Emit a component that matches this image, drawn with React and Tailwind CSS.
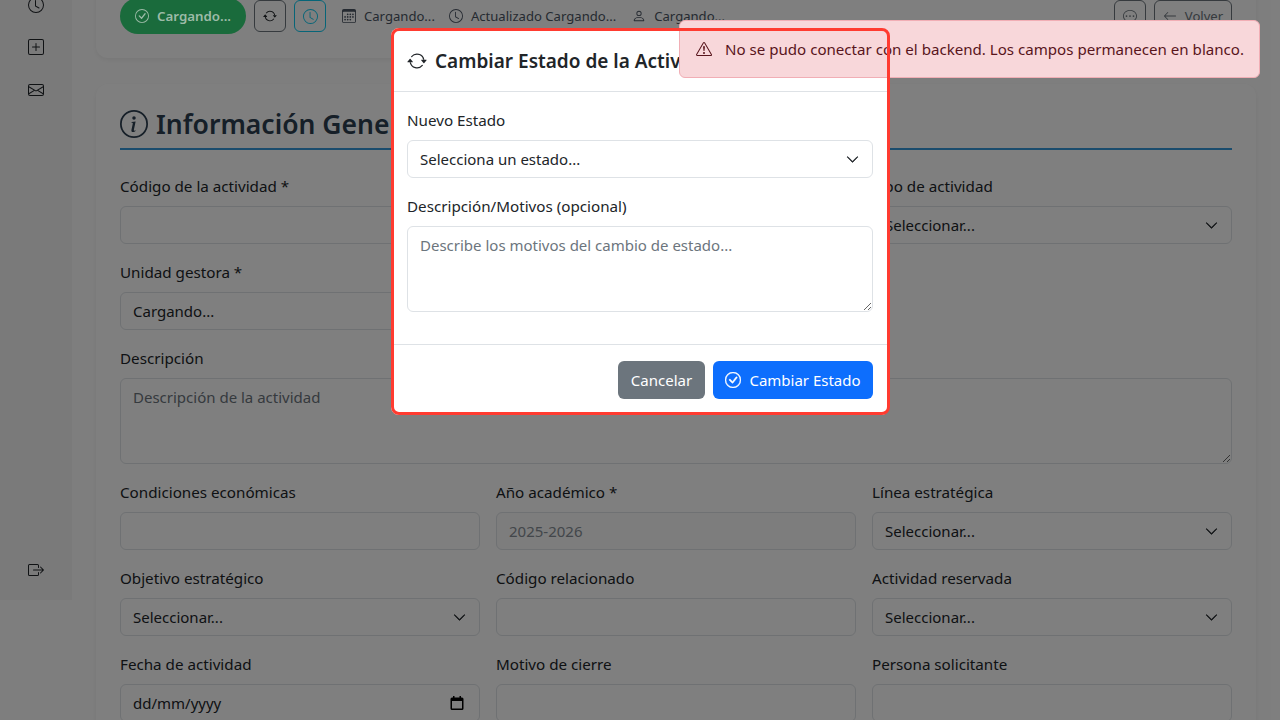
import React from 'react';
import {
  BsArrowRepeat, BsClock, BsPlusSquare, BsEnvelope, BsBoxArrowRight, BsCheckCircle, BsCalendar3,
  BsPerson, BsChatDots, BsArrowLeft, BsInfoCircle, BsExclamationTriangle, BsChevronDown,
} from 'react-icons/bs';

const control = 'w-full h-[38px] rounded-md border border-[#dee2e6] px-3 text-[15px] text-[#212529] flex items-center justify-between';

function Field({ label, children, className = '' }) {
  return (
    <div className={`mb-4 ${className}`}>
      <div className="h-6 mb-2 text-[15.2px] leading-6 text-[#212529]">{label}</div>
      {children}
    </div>
  );
}

function Select({ value }) {
  return (
    <div className={`${control} bg-white`}>
      <span>{value}</span>
      <BsChevronDown className="w-[13px] h-[13px] mr-[1px]" strokeWidth="0.8" />
    </div>
  );
}

function Input({ value }) {
  return <div className={`${control} bg-white`}>{value}</div>;
}

function Sidebar() {
  return (
    <div className="w-[72px] h-[640px] shrink-0 bg-[#f4f4f5] flex flex-col items-center pt-[36px] text-[#212529]">
      <BsClock className="w-4 h-4 mt-[1px]" />
      <BsPlusSquare className="w-4 h-4 mt-[26px]" />
      <BsEnvelope className="w-4 h-4 mt-[27px]" />
      <BsBoxArrowRight className="w-4 h-4 mt-auto mb-[22px]" />
    </div>
  );
}

function StatusBar() {
  return (
    <div className="h-[84px] rounded-xl bg-white shadow-[0_2px_5px_rgba(0,0,0,0.06)] px-6 pt-6 flex items-start justify-between">
      <div className="flex items-center h-9 text-[13.1px] text-[#4b5563]">
        <div className="relative z-10 w-[126px] h-9 rounded-full bg-[#1a6b3c] text-[#9dbba8] text-[13.3px] font-semibold flex items-center justify-center gap-[8px]">
          <BsCheckCircle className="w-[14px] h-[14px]" />
          <span className="pt-[1px]">Cargando...</span>
        </div>
        <div className="w-8 h-8 ml-2 rounded-md border border-[#6c757d] flex items-center justify-center text-[#212529]">
          <BsArrowRepeat className="w-[14px] h-[14px]" />
        </div>
        <div className="w-8 h-8 ml-2 rounded-md border border-[#0dcaf0] flex items-center justify-center text-[#0dcaf0]">
          <BsClock className="w-[15px] h-[15px]" />
        </div>
        <BsCalendar3 className="w-[14px] h-[14px] ml-4" />
        <span className="ml-2 pt-[1px]">Cargando...</span>
        <BsClock className="w-[14px] h-[14px] ml-[14px]" />
        <span className="ml-2 pt-[1px]">Actualizado Cargando...</span>
        <BsPerson className="w-[14px] h-[14px] ml-4" />
        <span className="ml-2 pt-[1px]">Cargando...</span>
      </div>
      <div className="flex items-center h-9 text-[13.1px] text-[#6c757d]">
        <div className="w-8 h-8 rounded-md border border-[#6c757d] flex items-center justify-center">
          <BsChatDots className="w-[14px] h-[14px]" />
        </div>
        <div className="w-[78px] h-8 ml-2 rounded-md border border-[#6c757d] flex items-center justify-center gap-2">
          <BsArrowLeft className="w-[14px] h-[14px]" />
          <span className="pt-[1px]">Volver</span>
        </div>
      </div>
    </div>
  );
}

function GeneralInfo() {
  return (
    <div className="mt-[26px] rounded-xl bg-white shadow-[0_2px_5px_rgba(0,0,0,0.06)] px-6 pt-6 pb-6">
      <div className="h-[42px] mb-6 border-b-2 border-[#3498db] flex items-start gap-2 text-[#2c3e50]">
        <BsInfoCircle className="w-7 h-7 mt-[2px]" />
        <h2 className="text-[26.5px] leading-8 font-semibold">Información General</h2>
      </div>
      <div className="grid grid-cols-3 gap-x-4">
        <Field label="Código de la actividad *"><Input /></Field>
        <Field label="Denominación *"><Input /></Field>
        <Field label="Tipo de actividad"><Select value="Seleccionar..." /></Field>
        <Field label="Unidad gestora *"><Input value="Cargando..." /></Field>
        <div className="col-span-2" />
        <Field label="Descripción" className="col-span-3">
          <textarea readOnly placeholder="Descripción de la actividad" className="block w-full h-[86px] rounded-md border border-[#dee2e6] bg-white px-3 py-[6px] text-[15px] leading-6 placeholder:text-[#6c757d]" />
        </Field>
        <Field label="Condiciones económicas"><Input /></Field>
        <Field label="Año académico *">
          <div className="w-full h-[38px] rounded-md border border-[#dee2e6] bg-[#fafafa] px-3 text-[15px] text-[#868e96] flex items-center">2025-2026</div>
        </Field>
        <Field label="Línea estratégica"><Select value="Seleccionar..." /></Field>
        <Field label="Objetivo estratégico"><Select value="Seleccionar..." /></Field>
        <Field label="Código relacionado"><Input /></Field>
        <Field label="Actividad reservada"><Select value="Seleccionar..." /></Field>
        <Field label="Fecha de actividad">
          <div className={`${control} bg-white`}>
            <span>dd/mm/yyyy</span>
            <svg viewBox="0 0 16 16" className="w-4 h-4 mr-[2px] text-black" fill="currentColor">
              <path d="M4 1h1.5v1.5h5V1H12v1.5h1A1.5 1.5 0 0 1 14.5 4v9.5A1.5 1.5 0 0 1 13 15H3a1.5 1.5 0 0 1-1.5-1.5V4A1.5 1.5 0 0 1 3 2.5h1V1zM3 6v7.5h10V6H3z" />
            </svg>
          </div>
        </Field>
        <Field label="Motivo de cierre"><Input /></Field>
        <Field label="Persona solicitante"><Input /></Field>
      </div>
    </div>
  );
}

function StatusModal() {
  return (
    <div className="w-[498px] h-[387px] rounded-lg bg-white flex flex-col text-[#212529]">
      <div className="h-[64px] shrink-0 border-b border-[#dee2e6] px-4 pt-[2px] flex items-center gap-2">
        <BsArrowRepeat className="w-5 h-5" />
        <h5 className="text-[19px] leading-6 font-semibold whitespace-nowrap">Cambiar Estado de la Actividad</h5>
      </div>
      <div className="flex-1 px-4 pt-4">
        <Field label="Nuevo Estado"><Select value="Selecciona un estado..." /></Field>
        <Field label="Descripción/Motivos (opcional)">
          <textarea readOnly placeholder="Describe los motivos del cambio de estado..." className="block w-full h-[86px] rounded-md border border-[#dee2e6] bg-white px-3 py-[6px] text-[15px] leading-6 placeholder:text-[#6c757d]" />
        </Field>
      </div>
      <div className="h-[71px] shrink-0 border-t border-[#dee2e6] px-4 flex items-center justify-end gap-2 text-[15px] text-white">
        <div className="w-[87px] h-[38px] rounded-md bg-[#6c757d] flex items-center justify-center">Cancelar</div>
        <div className="w-[160px] h-[38px] rounded-md bg-[#0d6efd] flex items-center justify-center gap-2">
          <BsCheckCircle className="w-4 h-4" strokeWidth="0.4" />
          <span>Cambiar Estado</span>
        </div>
      </div>
    </div>
  );
}

export default function App() {
  return (
    <div className="relative w-[1280px] h-[720px] overflow-hidden bg-[#fdfdfd] font-['Noto_Sans',sans-serif]">
      <div className="flex -mt-[40px] pr-6">
        <Sidebar />
        <div className="flex-1 ml-6 pt-[14px]">
          <StatusBar />
          <GeneralInfo />
        </div>
      </div>

      <div className="absolute inset-0 bg-black/50 flex justify-center pt-[28px]">
        <StatusModal />
      </div>

      <div className="absolute top-5 right-5 h-[58px] w-[581px] rounded-md border border-[#f1aeb5] bg-[#f8d7da] text-[#58151c] text-[15.1px] flex items-center pl-4 gap-[13px]">
        <BsExclamationTriangle className="w-4 h-4" />
        <span>No se pudo conectar con el backend. Los campos permanecen en blanco.</span>
      </div>

      <div className="absolute left-[391px] top-[28px] w-[499px] h-[387px] rounded-lg border-[3px] border-[#ff3b30] pointer-events-none" />
    </div>
  );
}
